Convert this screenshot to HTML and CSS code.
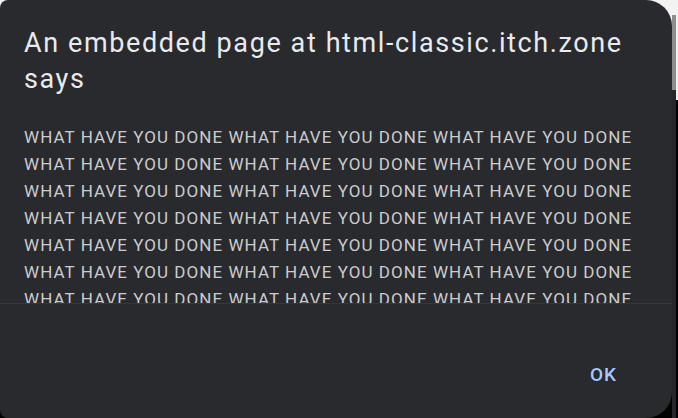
FILE: index.html
```html
<!DOCTYPE html>
<html>
<head>
<meta charset="utf-8">
<link rel="stylesheet" href="styles.css">
</head>
<body>
<div class="dialog">
  <h1 class="title">An embedded page at html-classic.itch.zone says</h1>
  <div class="message">WHAT HAVE YOU DONE WHAT HAVE YOU DONE WHAT HAVE YOU DONE WHAT HAVE YOU DONE WHAT HAVE YOU DONE WHAT HAVE YOU DONE WHAT HAVE YOU DONE WHAT HAVE YOU DONE WHAT HAVE YOU DONE WHAT HAVE YOU DONE WHAT HAVE YOU DONE WHAT HAVE YOU DONE WHAT HAVE YOU DONE WHAT HAVE YOU DONE WHAT HAVE YOU DONE WHAT HAVE YOU DONE WHAT HAVE YOU DONE WHAT HAVE YOU DONE WHAT HAVE YOU DONE WHAT HAVE YOU DONE WHAT HAVE YOU DONE WHAT HAVE YOU DONE WHAT HAVE YOU DONE WHAT HAVE YOU DONE WHAT HAVE YOU DONE WHAT HAVE YOU DONE WHAT HAVE YOU DONE</div>
  <div class="footer"><span class="ok">OK</span></div>
</div>
<div class="scrollbar"><div class="track-top"></div><div class="thumb"></div><div class="track"></div></div>
</body>
</html>
```
FILE: styles.css
```css
html, body {
  margin: 0;
  padding: 0;
  width: 678px;
  height: 418px;
  overflow: hidden;
}
body {
  display: flex;
  background: linear-gradient(#f2f2f2 0 100px, #000 100px);
  font-family: Roboto, "Liberation Sans", sans-serif;
}
.dialog {
  width: 672px;
  height: 418px;
  flex: none;
  background: #292a2d;
  border-radius: 8px 26px 26px 8px;
  display: flex;
  flex-direction: column;
  box-sizing: border-box;
  padding-top: 25px;
}
.title {
  margin: 0;
  padding: 0 24px;
  font-size: 27px;
  line-height: 36px;
  font-weight: 400;
  letter-spacing: 1.6px;
  color: #e8eaed;
}
.message {
  margin-top: 27px;
  padding: 0 24px;
  height: 179px;
  overflow: hidden;
  font-size: 17px;
  line-height: 27px;
  letter-spacing: 1.05px;
  color: #cbcccd;
  border-bottom: 1px solid #36373a;
}
.footer {
  display: flex;
  justify-content: flex-end;
  padding: 59px 55px 0 0;
}
.ok {
  font-size: 19px;
  line-height: 24px;
  font-weight: 500;
  letter-spacing: 1px;
  color: #a8c7fa;
}
.scrollbar {
  width: 6px;
  display: flex;
  flex-direction: column;
}
.track-top {
  height: 15px;
}
.thumb {
  height: 75px;
  width: 4px;
  background: #8e8e8e;
}
.track {
  flex: 1;
  width: 4px;
  background: #26272a;
}
```
